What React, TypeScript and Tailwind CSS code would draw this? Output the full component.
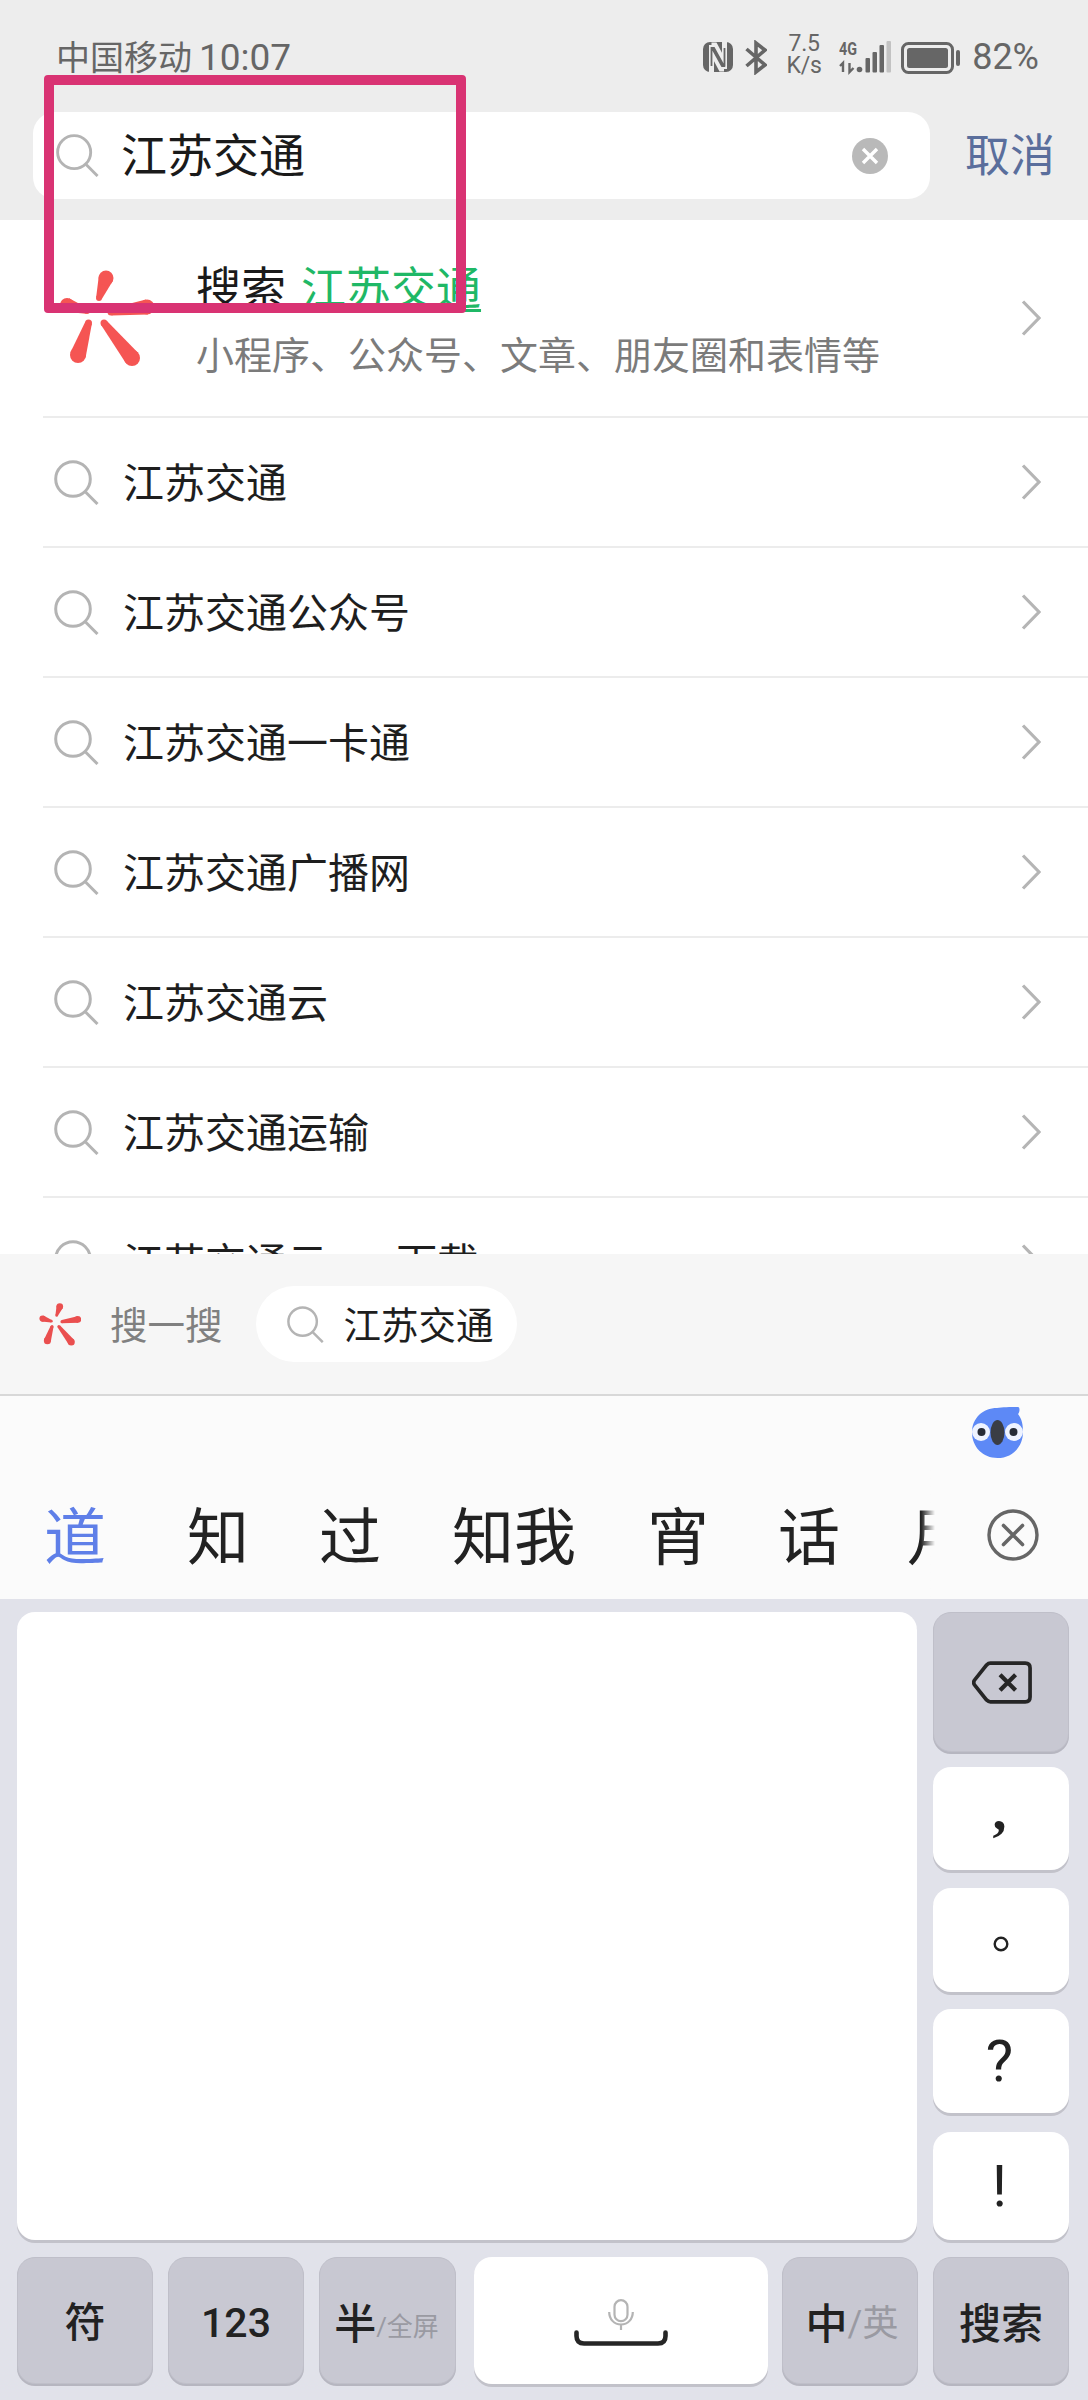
import React from "react";

const FONT = "[font-family:Roboto,'Noto_Sans_CJK_SC',sans-serif]";

function Taper({ a, b, ra, rb, fill }: { a: [number, number]; b: [number, number]; ra: number; rb: number; fill: string }) {
  const dx = b[0] - a[0];
  const dy = b[1] - a[1];
  const l = Math.hypot(dx, dy);
  const nx = -dy / l;
  const ny = dx / l;
  const pts = [
    [a[0] + nx * ra, a[1] + ny * ra],
    [b[0] + nx * rb, b[1] + ny * rb],
    [b[0] - nx * rb, b[1] - ny * rb],
    [a[0] - nx * ra, a[1] - ny * ra],
  ]
    .map((p) => p.join(","))
    .join(" ");
  return (
    <g fill={fill}>
      <polygon points={pts} />
      <circle cx={a[0]} cy={a[1]} r={ra} />
      <circle cx={b[0]} cy={b[1]} r={rb} />
    </g>
  );
}

function Logo({ className, fill }: { className: string; fill: string }) {
  return (
    <svg viewBox="0 0 95 97" className={className}>
      <Taper a={[47, 8]} b={[40, 28]} ra={7.5} rb={3} fill={fill} />
      <Taper a={[8, 35]} b={[28, 41]} ra={7} rb={3} fill={fill} />
      <Taper a={[88, 37]} b={[52, 42]} ra={7.5} rb={3.5} fill={fill} />
      <Taper a={[19, 85]} b={[29.5, 53]} ra={8} rb={3.5} fill={fill} />
      <Taper a={[73, 88]} b={[45, 53]} ra={8} rb={3.5} fill={fill} />
    </svg>
  );
}

function Mag({ className }: { className: string }) {
  return (
    <svg viewBox="0 0 45 45" fill="none" stroke="#b4b4b4" strokeWidth="3" className={className}>
      <circle cx="19" cy="19" r="17.3" />
      <path d="M31.5 32 L43.5 44" />
    </svg>
  );
}

function Chevron() {
  return (
    <svg viewBox="0 0 20 36" fill="none" stroke="#b5b5b5" strokeWidth="3.2" className="w-[20px] h-[36px] shrink-0">
      <path d="M2 1.5 L18 18 L2 34.5" />
    </svg>
  );
}

function Row({ text }: { text: string }) {
  return (
    <div className="ml-[43px] pl-[11px] pr-[47px] h-[130px] shrink-0 flex items-center border-b-[2px] border-[#ececec]">
      <Mag className="w-[45px] h-[45px] shrink-0" />
      <div className="ml-[24px] mt-[3px] flex-1 text-[41px] leading-[50px] text-[#1e1e1e]">{text}</div>
      <Chevron />
    </div>
  );
}

function StatusIcons() {
  return (
    <div className="flex items-start text-[#666666]">
      <svg viewBox="0 0 30 30" className="w-[30px] h-[30px] mt-[42px]">
        <rect x="0" y="0" width="30" height="30" rx="7" fill="#666666" />
        <path d="M8.5 30 V3 M8.5 3 H12 L21 20 M21 27 H18 L9 10 M21.5 27 V0" fill="none" stroke="#ededed" strokeWidth="5" />
        <path d="M8.5 24 V6 H11 L21 24 H19 L9 6 M21.5 24 V6" fill="none" stroke="#666666" strokeWidth="1.8" />
      </svg>
      <svg viewBox="0 0 22 35" fill="none" stroke="#666666" strokeWidth="3.6" className="w-[22px] h-[35px] mt-[40px] ml-[12px]">
        <path d="M1.5 9 L20 25 L11 32 V3 L20 10 L1.5 26" />
      </svg>
      <div className="ml-[19px] w-[36px] mt-[33px] text-[23px] leading-[22px] text-center tracking-[-0.2px]">
        <div>7.5</div>
        <div>K/s</div>
      </div>
      <svg viewBox="0 0 54 36" className="w-[54px] h-[36px] mt-[40px] ml-[17px]" fill="#666666">
        <text x="0" y="15" fontFamily="Roboto, sans-serif" fontWeight="700" fontSize="18" textLength="18" lengthAdjust="spacingAndGlyphs">4G</text>
        <path d="M1 26 L4 23 V32 M10.5 23 V32 L14.5 28" fill="none" stroke="#666666" strokeWidth="2.4" />
        <circle cx="20.5" cy="29.5" r="2.8" />
        <rect x="26.5" y="18" width="4.5" height="14.5" rx="1" />
        <rect x="33.5" y="12" width="4.5" height="20.5" rx="1" />
        <rect x="40.5" y="5" width="4.5" height="27.5" rx="1" />
        <rect x="47.5" y="1" width="4.5" height="31.5" rx="1" fill="#c2c2c2" />
      </svg>
      <svg viewBox="0 0 60 32" className="w-[60px] h-[32px] mt-[42px] ml-[8px]">
        <rect x="1.5" y="1.5" width="50" height="29" rx="6" fill="none" stroke="#666666" strokeWidth="3" />
        <rect x="6" y="6" width="41" height="20" rx="2.5" fill="#666666" />
        <rect x="55" y="8" width="4" height="16" rx="2" fill="#666666" />
      </svg>
      <div className="ml-[11px] mt-[36px] text-[36px] leading-[42px]">82%</div>
    </div>
  );
}

function GrayKey({ className, children }: { className: string; children: React.ReactNode }) {
  return (
    <div className={`h-[127px] rounded-[18px] bg-[#c8c8d2] border border-[#bfbfc9] shadow-[0_2px_0_#b6b6c0] flex items-center justify-center pt-[7px] text-[#222222] ${className}`}>
      {children}
    </div>
  );
}

function PunctKey({ className, children }: { className: string; children: React.ReactNode }) {
  return (
    <div className={`w-[136px] rounded-[18px] bg-white shadow-[0_3px_0_#c2c2ca] flex items-center justify-center text-[#222222] ${className}`}>
      {children}
    </div>
  );
}

export default function App() {
  const rows = ["江苏交通", "江苏交通公众号", "江苏交通一卡通", "江苏交通广播网", "江苏交通云", "江苏交通运输", "江苏交通云app下载"];
  return (
    <div className={`relative w-[1088px] h-[2400px] overflow-hidden bg-white flex flex-col ${FONT}`}>
      {/* header */}
      <div className="h-[220px] shrink-0 bg-[#ededed] flex flex-col">
        <div className="h-[112px] shrink-0 pl-[56px] pr-[49px] flex justify-between items-start">
          <div className="mt-[36px] flex items-center text-[#666666] h-[44px]">
            <span className="text-[34px] leading-[44px]">中国移动</span>
            <span className="ml-[7px] text-[37px] leading-[44px]">10:07</span>
          </div>
          <StatusIcons />
        </div>
        <div className="flex items-center">
          <div className="ml-[33px] w-[897px] h-[87px] rounded-[22px] bg-white flex items-center pl-[23px] pr-[42px]">
            <Mag className="w-[43px] h-[43px] shrink-0" />
            <div className="ml-[22px] flex-1 text-[46px] leading-[56px] text-[#1a1a1a]">江苏交通</div>
            <svg viewBox="0 0 36 36" className="w-[36px] h-[36px] shrink-0">
              <circle cx="18" cy="18" r="18" fill="#b9b9b9" />
              <path d="M11 11 L25 25 M25 11 L11 25" stroke="#ffffff" strokeWidth="3.4" />
            </svg>
          </div>
          <div className="ml-[35px] mt-[2px] text-[45px] leading-[56px] text-[#5a6e9c]">取消</div>
        </div>
      </div>

      {/* suggestions */}
      <div className="h-[1034px] shrink-0 overflow-hidden flex flex-col">
        <div className="h-[198px] shrink-0 ml-[43px] pl-[16px] pr-[47px] flex items-center border-b-[2px] border-[#ececec]">
          <Logo className="w-[95px] h-[97px] shrink-0" fill="#f55553" />
          <div className="ml-[42px] flex-1 mt-[10px]">
            <div className="text-[45px] leading-[66px] text-[#1a1a1a] whitespace-nowrap">
              搜索<span className="inline-block w-[15px]" />
              <span className="text-[#1fb866] underline decoration-[3px] underline-offset-[4px]">江苏交通</span>
            </div>
            <div className="text-[38px] leading-[66px] text-[#7b7b7b]">小程序、公众号、文章、朋友圈和表情等</div>
          </div>
          <Chevron />
        </div>
        {rows.map((t) => (
          <Row key={t} text={t} />
        ))}
      </div>

      {/* search-one-search bar */}
      <div className="h-[142px] shrink-0 bg-[#f6f6f6] border-b-[2px] border-[#d8d8d8] flex items-start pt-[32px]">
        <Logo className="ml-[39px] mt-[17px] w-[42px] h-[43px] shrink-0" fill="#ea4f4f" />
        <div className="ml-[29px] mt-[17px] text-[37.5px] leading-[46px] text-[#808080]">搜一搜</div>
        <div className="ml-[33px] h-[76px] w-[261px] rounded-full bg-white flex items-center pl-[31px]">
          <Mag className="w-[37px] h-[37px] shrink-0" />
          <div className="ml-[20px] mt-[3px] text-[37.5px] leading-[46px] text-[#1e1e1e] whitespace-nowrap">江苏交通</div>
        </div>
      </div>

      {/* candidates */}
      <div className="relative h-[203px] shrink-0 bg-[#fbfbfb] flex items-end">
        <div className="relative w-[935px] h-[129px] overflow-hidden flex items-start pt-[34px] pl-[44px] text-[62px] leading-[70px] text-[#222222] whitespace-nowrap">
          <span className="text-[#5f7fe8] mr-[81px]">道</span>
          <span className="mr-[70px]">知</span>
          <span className="mr-[71px]">过</span>
          <span className="mr-[71px]">知我</span>
          <span className="mr-[69px]">宵</span>
          <span className="mr-[67px]">话</span>
          <span>月</span>
          <div className="absolute right-0 top-0 w-[14px] h-full bg-gradient-to-r from-[#fbfbfb00] to-[#fbfbfb]" />
        </div>
        <div className="flex-1 h-[129px] flex items-start pl-[52px] pt-[39px]">
          <svg viewBox="0 0 52 52" fill="none" stroke="#666666" className="w-[52px] h-[52px]">
            <circle cx="26" cy="26" r="24" strokeWidth="3.4" />
            <path d="M16.5 16.5 L35.5 35.5 M35.5 16.5 L16.5 35.5" strokeWidth="3.6" strokeLinecap="round" />
          </svg>
        </div>
        {/* floating assistant mascot */}
        <svg viewBox="0 0 51 51" className="absolute left-[972px] top-[11px] w-[51px] h-[51px]">
          <path d="M25 1 C30 0 38 0 46 0 C48 0 48 5 46 7 C50 12 51 18 51 25 C51 40 40 51 25.5 51 C11 51 0 40 0 25.5 C0 11 11 1 25 1 Z" fill="#5d89f6" />
          <ellipse cx="9" cy="25" rx="9" ry="9" fill="#eef3ff" />
          <ellipse cx="42" cy="25" rx="9" ry="9" fill="#eef3ff" />
          <circle cx="9.5" cy="25" r="4" fill="#262b36" />
          <circle cx="41.5" cy="25" r="4" fill="#262b36" />
          <ellipse cx="25.5" cy="25.5" rx="7" ry="12.5" fill="#3a3d45" />
        </svg>
      </div>

      {/* keyboard */}
      <div className="flex-1 bg-[#e1e2ea] pt-[13px] pl-[17px] flex flex-col">
        <div className="flex items-start">
          <div className="w-[900px] h-[628px] rounded-[18px] bg-white shadow-[0_3px_0_#c2c2ca]" />
          <div className="ml-[16px] flex flex-col">
            <div className="w-[136px] h-[140px] rounded-[18px] bg-[#c8c8d2] border border-[#bfbfc9] shadow-[0_2px_0_#b6b6c0] flex items-center justify-center">
              <svg viewBox="0 0 62 44" fill="none" stroke="#262626" className="w-[60px] h-[43px] ml-[2px]">
                <path d="M19 2 H55 Q60 2 60 7 V37 Q60 42 55 42 H19 Q17 42 15 40 L3 25 Q0.5 22 3 19 L15 4 Q17 2 19 2 Z" strokeWidth="3.8" />
                <path d="M29 14 L45 30 M45 14 L29 30" strokeWidth="4.4" />
              </svg>
            </div>
            <PunctKey className="mt-[15px] h-[103px] text-[56px] font-bold pb-[18px] pr-[3px] [font-family:'Liberation_Serif',serif]">,</PunctKey>
            <PunctKey className="mt-[18px] h-[104px]">
              <svg viewBox="0 0 16 16" fill="none" stroke="#222222" strokeWidth="2.4" className="w-[16px] h-[16px] mt-[8px]">
                <circle cx="8" cy="8" r="6.3" />
              </svg>
            </PunctKey>
            <PunctKey className="mt-[17px] h-[104px] text-[58px] pr-[3px]">?</PunctKey>
            <PunctKey className="mt-[19px] h-[108px] text-[58px] pr-[3px]">!</PunctKey>
          </div>
        </div>
        <div className="mt-[17px] flex items-start">
          <GrayKey className="w-[136px] text-[41px] font-medium">符</GrayKey>
          <GrayKey className="ml-[15px] w-[136px] text-[41px] font-medium">123</GrayKey>
          <GrayKey className="ml-[15px] w-[137px]">
            <span className="text-[42px] font-medium ml-[-2px]">半</span>
            <span className="text-[26px] text-[#9a9aa2] mt-[6px]">/全屏</span>
          </GrayKey>
          <div className="ml-[18px] w-[294px] h-[127px] rounded-[18px] bg-white shadow-[0_3px_0_#c2c2ca] flex flex-col items-center pt-[42px]">
            <svg viewBox="0 0 26 31" fill="none" stroke="#b4b4b4" strokeWidth="2.2" className="w-[26px] h-[31px]">
              <rect x="6.5" y="1.2" width="13" height="21" rx="6.5" />
              <path d="M1.2 13 C1.2 20 6 25.5 13 25.5 C20 25.5 24.8 20 24.8 13 M13 25.5 V31" />
            </svg>
            <svg viewBox="0 0 94 16" fill="none" stroke="#262626" strokeWidth="4.6" strokeLinecap="round" className="w-[94px] h-[16px]">
              <path d="M2.5 2.5 V6 Q2.5 13.5 10 13.5 H84 Q91.5 13.5 91.5 6 V2.5" />
            </svg>
          </div>
          <GrayKey className="ml-[14px] w-[136px]">
            <span className="text-[42px] font-medium ml-[4px]">中</span>
            <span className="text-[36px] text-[#9a9aa2]">/英</span>
          </GrayKey>
          <GrayKey className="ml-[15px] w-[136px] text-[42px] font-medium">搜索</GrayKey>
        </div>
      </div>

      {/* hand-drawn annotation over the screenshot */}
      <div className="absolute left-[44px] top-[75px] w-[422px] h-[238px] border-[10px] border-[#d93373] rounded-[4px]" />
    </div>
  );
}
